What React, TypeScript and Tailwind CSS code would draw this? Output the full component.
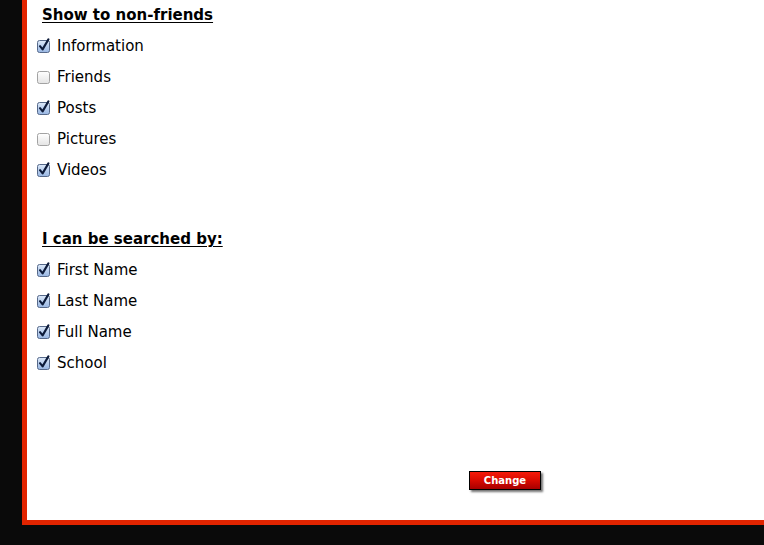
import React from "react";

const CheckBox = ({ checked }: { checked: boolean }) =>
  checked ? (
    <svg width="15" height="15" viewBox="0 0 15 15" className="shrink-0 -mt-[3px]">
      <defs>
        <linearGradient id="cbg" x1="0" y1="0" x2="0" y2="1">
          <stop offset="0" stopColor="#dde9f8" />
          <stop offset="0.5" stopColor="#b9cfee" />
          <stop offset="1" stopColor="#98b6e2" />
        </linearGradient>
      </defs>
      <rect x="1.5" y="2.5" width="12" height="12" rx="2" fill="url(#cbg)" stroke="#56698a" strokeWidth="1" />
      <path d="M4 8.2 L6.6 11.4 L12.4 1.4" fill="none" stroke="#0d1b3a" strokeWidth="2.1" strokeLinecap="round" strokeLinejoin="round" />
    </svg>
  ) : (
    <svg width="15" height="15" viewBox="0 0 15 15" className="shrink-0 -mt-[3px]">
      <defs>
        <linearGradient id="cbw" x1="0" y1="0" x2="0" y2="1">
          <stop offset="0" stopColor="#ffffff" />
          <stop offset="1" stopColor="#e4e4e4" />
        </linearGradient>
      </defs>
      <rect x="1.5" y="2.5" width="12" height="12" rx="2" fill="url(#cbw)" stroke="#a2a2a2" strokeWidth="1" />
    </svg>
  );

const Row = ({ label, checked }: { label: string; checked: boolean }) => (
  <div className="flex items-center h-[31px] gap-[6px]">
    <CheckBox checked={checked} />
    <span className="text-[15px] leading-[31px] text-black">{label}</span>
  </div>
);

export default function App() {
  const font = { fontFamily: '"DejaVu Sans", Verdana, sans-serif' };
  return (
    <div className="w-full h-[545px] bg-[#0a0a0a] overflow-hidden" style={font}>
      <div className="ml-[22px] h-[525px] bg-white border-l-[5px] border-b-[5px] border-[#e12400] pl-[9px] pt-[1px]">
        <div className="h-[30px] pl-[6px] text-[15px] leading-[28px] font-bold underline underline-offset-[2px] text-black">
          Show to non-friends
        </div>
        <Row label="Information" checked />
        <Row label="Friends" checked={false} />
        <Row label="Posts" checked />
        <Row label="Pictures" checked={false} />
        <Row label="Videos" checked />
        <div className="mt-[38px] h-[31px] pl-[6px] text-[15px] leading-[31px] font-bold underline underline-offset-[2px] text-black">
          I can be searched by:
        </div>
        <Row label="First Name" checked />
        <Row label="Last Name" checked />
        <Row label="Full Name" checked />
        <Row label="School" checked />
        <div className="mt-[88px] ml-[433px]">
          <button className="w-[72px] h-[19px] border border-black bg-gradient-to-b from-[#f51a0a] via-[#d80a00] to-[#a80000] text-white text-[10px] font-bold leading-[17px] shadow-[2px_2px_2px_rgba(0,0,0,0.55)]">
            Change
          </button>
        </div>
      </div>
    </div>
  );
}
